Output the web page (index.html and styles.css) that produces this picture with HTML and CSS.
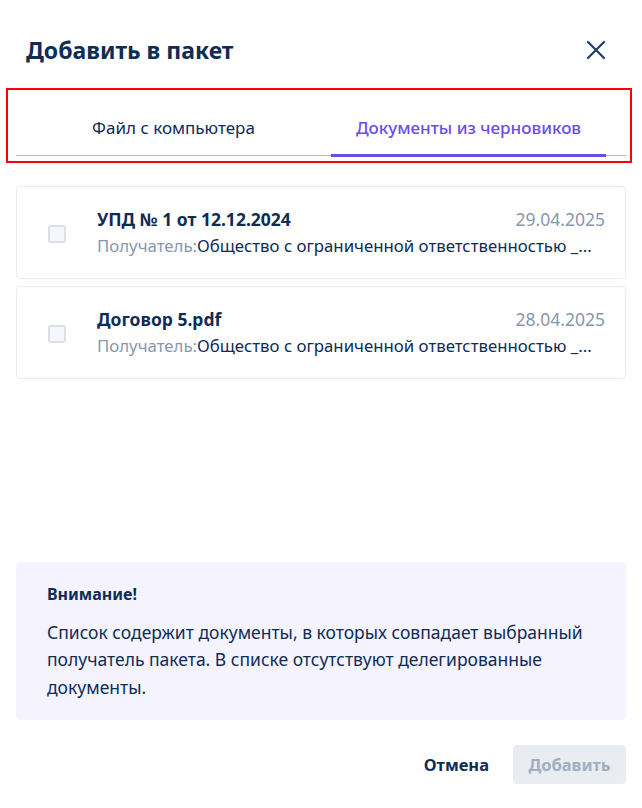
FILE: index.html
```html
<!DOCTYPE html>
<html>
<head>
  <title>Добавить в пакет</title>
  <link rel="stylesheet" href="styles.css">
</head>
<body>
  <div class="modal">
    <div class="modal-header">
      <h1>Добавить в пакет</h1>
      <button class="close-btn" aria-label="Закрыть">
        <svg width="20" height="20" viewBox="0 0 20 20"><path d="M2 2L18 18M18 2L2 18" stroke="#1c3d6b" stroke-width="2.2" stroke-linecap="round"/></svg>
      </button>
    </div>

    <!-- tabs (outlined in red) -->
    <div class="tabs-frame">
      <div class="tabs">
        <div class="tab">Файл с компьютера</div>
        <div class="tab active">Документы из черновиков</div>
      </div>
    </div>

    <div class="doc-list">
      <div class="doc-card">
        <span class="checkbox"></span>
        <div class="doc-info">
          <div class="doc-top">
            <span class="doc-name">УПД № 1 от 12.12.2024</span>
            <span class="doc-date">29.04.2025</span>
          </div>
          <div class="doc-recipient"><span class="label">Получатель:</span>Общество с ограниченной ответственностью _...</div>
        </div>
      </div>
      <div class="doc-card">
        <span class="checkbox"></span>
        <div class="doc-info">
          <div class="doc-top">
            <span class="doc-name">Договор 5.pdf</span>
            <span class="doc-date">28.04.2025</span>
          </div>
          <div class="doc-recipient"><span class="label">Получатель:</span>Общество с ограниченной ответственностью _...</div>
        </div>
      </div>
    </div>

    <div class="notice">
      <div class="notice-title">Внимание!</div>
      <p>Список содержит документы, в которых совпадает выбранный получатель пакета. В списке отсутствуют делегированные документы.</p>
    </div>

    <div class="actions">
      <button class="btn-cancel">Отмена</button>
      <button class="btn-add" disabled>Добавить</button>
    </div>
  </div>
</body>
</html>
```

FILE: styles.css
```css
body {
  margin: 0;
  background-color: #ffffff;
  font-family: "Noto Sans", sans-serif;
  color: #0f2c55;
}
.modal {
  width: 642px;
  height: 808px;
  box-sizing: border-box;
  padding: 0 16px;
  display: flex;
  flex-direction: column;
}
.modal-header {
  display: flex;
  justify-content: space-between;
  align-items: center;
  padding: 34px 20px 0 10px;
  height: 32px;
}
.modal-header h1 {
  margin: 0;
  font-size: 23px;
  font-weight: 700;
  color: #0f2c55;
}
.close-btn {
  border: none;
  background: none;
  padding: 0;
  width: 20px;
  height: 20px;
  cursor: pointer;
}
.tabs-frame {
  margin: 22px -6px 0 -10px;
  border: 2px solid #ff0000; /* highlight frame */
  padding: 0 4px 6px 8px;
  height: 75px;
  box-sizing: border-box;
}
.tabs {
  display: flex;
  height: 65px;
  border-bottom: 1px solid #b8aff2;
}
.tab {
  width: 315px;
  display: flex;
  align-items: center;
  justify-content: center;
  padding-top: 10px;
  font-size: 17px;
  color: #0f2c55;
  position: relative;
}
.tab.active {
  width: 275px;
  color: #6b4de6;
  font-weight: 500;
}
.tab.active::after {
  content: "";
  position: absolute;
  left: 0;
  right: 0;
  bottom: -2px;
  height: 3px;
  background-color: #6b4de6;
}
.doc-list {
  margin-top: 23px;
  display: flex;
  flex-direction: column;
  gap: 7px;
}
.doc-card {
  display: flex;
  align-items: center;
  height: 93px;
  box-sizing: border-box;
  border: 1px solid #ebeaf7;
  border-radius: 4px;
  padding: 0 20px 0 31px;
}
.checkbox {
  width: 18px;
  height: 18px;
  box-sizing: border-box;
  border: 2px solid #dce0e8;
  border-radius: 3px;
  background-color: #f6f7fa;
  flex-shrink: 0;
  margin-top: 2px;
}
.doc-info {
  margin-left: 31px;
  flex: 1;
  min-width: 0;
}
.doc-top {
  display: flex;
  justify-content: space-between;
  align-items: baseline;
  line-height: 24px;
}
.doc-name {
  font-size: 17.5px;
  font-weight: 700;
}
.doc-date {
  font-size: 17.5px;
  color: #8797ae;
}
.doc-recipient {
  margin-top: 3px;
  font-size: 16.8px;
  line-height: 24px;
  white-space: nowrap;
  overflow: hidden;
}
.doc-recipient .label {
  color: #8797ae;
}
.notice {
  margin-top: auto;
  background-color: #f4f3fe;
  border-radius: 4px;
  padding: 20px 30px 19px 31px;
}
.notice-title {
  font-size: 16px;
  font-weight: 700;
  line-height: 24px;
}
.notice p {
  margin: 13px 0 0 0;
  font-size: 17.5px;
  line-height: 27.5px;
}
.actions {
  display: flex;
  justify-content: flex-end;
  align-items: center;
  gap: 12px;
  margin-top: 25px;
  margin-bottom: 24px;
}
.btn-cancel {
  border: none;
  background: none;
  font-family: inherit;
  font-size: 16.5px;
  font-weight: 700;
  color: #0f2c55;
  padding: 0 12px;
  height: 39px;
}
.btn-add {
  border: none;
  border-radius: 4px;
  background-color: #e9ecf0;
  font-family: inherit;
  font-size: 16.5px;
  font-weight: 700;
  color: #a1aec0;
  height: 39px;
  width: 113px;
  padding: 0;
}
```
